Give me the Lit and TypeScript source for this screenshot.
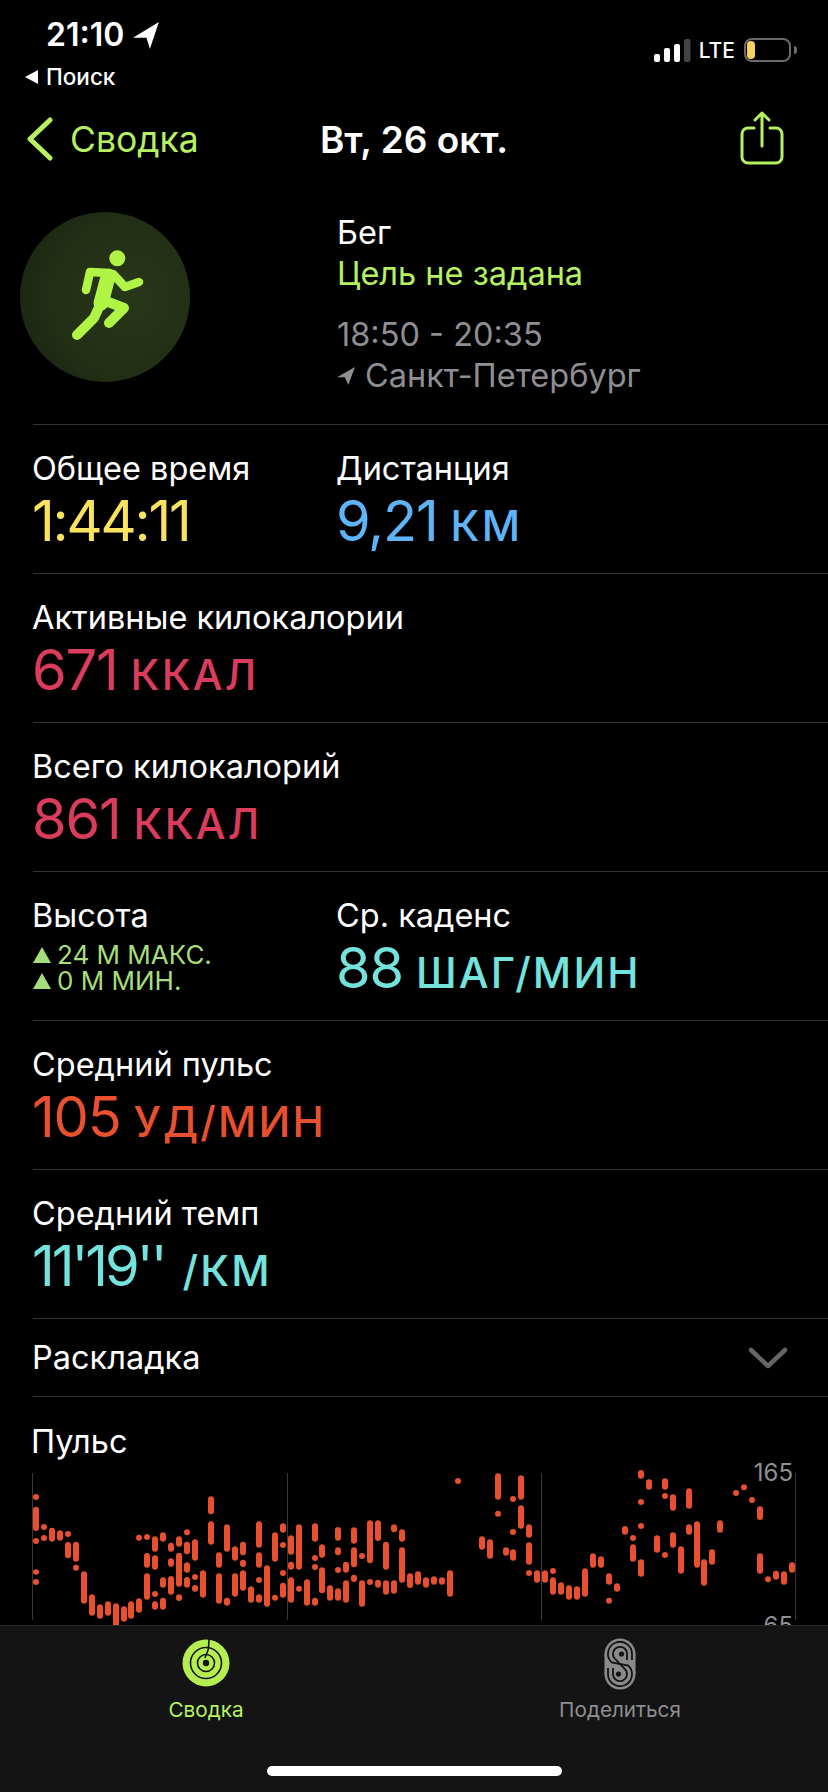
import { LitElement, html, css, svg } from 'lit';
import { customElement } from 'lit/decorators.js';

type Seg = number | [number, number];

// heart rate samples, traced as x, then dots (number) or bars ([top, bottom]), in 3x units
const PULSE_LEFT: [number, ...Seg[]][] = [
  [108, 168, [197, 270], 300, [385, 401], 423],
  [132, 258, 291],
  [156, [260, 302]],
  [180, [268, 299]],
  [204, 279, [303, 352]],
  [228, [302, 362], 380],
  [252, [391, 488]],
  [276, [460, 524]],
  [300, [490, 533]],
  [324, [481, 524]],
  [348, [487, 557]],
  [372, [496, 542]],
  [393, [481, 533]],
  [417, 290, [472, 515]],
  [441, 288, [336, 380], [397, 476]],
  [465, [286, 332], [343, 386], 459, [481, 506]],
  [489, [274, 302], [409, 440], [470, 506]],
  [513, [305, 332], [352, 377], [405, 461]],
  [537, [286, 317], [335, 437], [460, 480]],
  [561, 274, [302, 340], [364, 395], [408, 440]],
  [585, [295, 359], 408, [432, 452]],
  [609, [388, 470]],
  [633, [166, 220], [241, 311]],
  [657, [334, 380], [397, 488]],
  [681, [250, 332], [470, 494]],
  [705, [316, 359], [397, 467]],
  [729, [302, 343], [356, 378], [388, 449]],
  [753, [436, 485]],
  [777, [241, 320], [334, 380], 417, [460, 485]],
  [801, [373, 497]],
  [825, [274, 362], 470],
  [849, [247, 275], 312, 396, [425, 470]],
  [873, [283, 341], [362, 386], [409, 485]],
  [897, [250, 386], 443],
  [921, [415, 494]],
  [945, [247, 302], 351, 378, [470, 494]],
  [966, [310, 350], [379, 457]],
  [990, [433, 479]],
  [1014, [258, 299], [319, 343], 387, [442, 479]],
  [1038, [362, 395], [418, 485]],
  [1062, [259, 308], [319, 379], [401, 423]],
  [1086, 345, [418, 497]],
  [1110, [238, 367], 423],
  [1134, [238, 300], [416, 440]],
  [1158, [302, 386], [418, 461]],
  [1182, [250, 274], [418, 458]],
  [1206, [265, 302], [319, 425]],
  [1230, [397, 441]],
];

const PULSE_RIGHT: [number, ...Seg[]][] = [
  [12, [391, 431]],
  [36, [409, 440]],
  [60, [406, 431]],
  [84, [409, 431]],
  [108, [388, 467]],
  [132, 120],
  [204, [286, 326]],
  [228, [295, 353]],
  [252, [97, 176], 218],
  [276, [319, 344]],
  [297, 174, 273, [325, 359]],
  [321, [103, 176], [193, 263]],
  [345, [250, 290], [304, 371], 396],
  [369, [388, 425]],
  [393, [388, 425]],
  [417, 390, [409, 461]],
  [441, [424, 461]],
  [465, [433, 476]],
  [489, [436, 476]],
  [513, [382, 467]],
  [537, [337, 380]],
  [561, [346, 380]],
  [585, [397, 431], 479],
  [609, [427, 452]],
  [633, [255, 281]],
  [657, 291, [310, 362]],
  [681, [87, 113], 183, 255, [355, 407]],
  [705, [115, 146]],
  [729, [283, 335]],
  [753, [112, 146], 165, 342],
  [777, [160, 209], [274, 320]],
  [801, [316, 398]],
  [825, [142, 203], [250, 281]],
  [849, [241, 380]],
  [870, [355, 434]],
  [894, [325, 371]],
  [918, [238, 275]],
  [966, 156],
  [990, 139],
  [1014, 177],
  [1038, [196, 237], [337, 398]],
  [1062, 415],
  [1086, [389, 416]],
  [1110, [391, 431]],
  [1134, [364, 395]],
];

const GRID_X = [32.5, 287.5, 541.5, 795.5];

const drawColumn = (col: [number, ...Seg[]], offset: number) => {
  const [x, ...segs] = col;
  const px = x / 3 + offset;
  return segs.map((s) => {
    const a = (Array.isArray(s) ? s[0] : s - 9) / 3 - 32;
    const b = (Array.isArray(s) ? s[1] : s + 9) / 3 - 32;
    return svg`<rect class="hr" x=${px - 3} y=${a} width="6" height=${b - a} rx="3"></rect>`;
  });
};

// one dark groove of the sharing icon, an S through both loops
const groove = (r: number) => {
  const k = r * 0.7;
  return `M${r} -4V-10A${r} ${r} 0 1 0 ${-k} ${-10 + k}L${k} ${10 - k}A${r} ${r} 0 1 1 ${-r} 10V4`;
};

@customElement('app-root')
export class AppRoot extends LitElement {
  static override styles = css`
    :host {
      display: flex;
      flex-direction: column;
      width: 828px;
      height: 1792px;
      overflow: hidden;
      background: #000;
      color: #fff;
      font-family: Inter, 'Noto Sans', sans-serif;
    }

    .main {
      flex: 1;
      min-height: 0;
      overflow: hidden;
    }

    svg {
      display: block;
    }

    /* status bar */
    .status {
      display: flex;
      justify-content: space-between;
      height: 96px;
      box-sizing: border-box;
      padding: 14px 31px 0 25px;
    }

    .clock {
      display: flex;
      align-items: center;
      gap: 9px;
      padding-left: 21px;
      font-size: 32px;
      line-height: 42px;
      font-weight: 600;
    }

    .back-app {
      display: flex;
      align-items: center;
      gap: 8px;
      margin-top: 7px;
      font-size: 22.500px;
      line-height: 28px;
      font-weight: 500;
    }

    .signal {
      display: flex;
      align-items: center;
      height: 26px;
      margin-top: 23px;
      font-size: 21px;
      font-weight: 500;
    }

    .lte {
      margin: 0 9px 0 8px;
    }

    .battery {
      box-sizing: border-box;
      width: 47px;
      height: 24px;
      padding: 1px;
      border: 2px solid #6b6b6b;
      border-radius: 8px;
    }

    .battery i {
      display: block;
      width: 8px;
      height: 100%;
      border-radius: 4px;
      background: #f6d45a;
    }

    .nub {
      width: 3px;
      height: 8px;
      margin-left: 3px;
      border-radius: 0 3px 3px 0;
      background: #6b6b6b;
    }

    /* nav */
    .nav {
      position: relative;
      display: flex;
      align-items: center;
      justify-content: space-between;
      height: 86px;
      padding: 0 44px 0 25px;
      color: #b6f161;
      font-size: 35.500px;
    }

    .nav-back {
      display: flex;
      align-items: center;
      gap: 15px;
    }

    .share {
      margin-top: -3px;
    }

    .nav h1 {
      position: absolute;
      left: 0;
      right: 0;
      margin: 0;
      text-align: center;
      color: #fff;
      font-size: 37px;
      font-weight: 600;
      pointer-events: none;
    }

    /* workout summary */
    .hero {
      display: grid;
      grid-template-columns: 304px 1fr;
      box-sizing: border-box;
      height: 243px;
      margin-left: 33px;
      padding-top: 30px;
      border-bottom: 1px solid #333;
      font-size: 32.500px;
      line-height: 41px;
    }

    .badge {
      width: 170px;
      height: 170px;
      margin-left: -13px;
      border-radius: 50%;
      background: radial-gradient(circle at 65% 50%, #283618 0%, #232f15 55%, #182010 100%);
    }

    .goal {
      color: #b6f161;
    }

    .times {
      margin-top: 20px;
      color: #8e8e93;
    }

    .place {
      display: flex;
      align-items: center;
      gap: 10px;
      color: #8e8e93;
    }

    /* metrics */
    .row {
      display: grid;
      grid-template-columns: 304px 1fr;
      box-sizing: border-box;
      height: 149px;
      margin-left: 33px;
      padding-top: 26px;
      border-bottom: 1px solid #333;
    }

    .label {
      margin-left: -1px;
      font-size: 32.500px;
      line-height: 36px;
      white-space: nowrap;
    }

    .value {
      margin: 4px 0 0 -1px;
      font-size: 56px;
      line-height: 60px;
      font-weight: 400;
      letter-spacing: -1.200px;
      white-space: nowrap;
    }

    .tight {
      letter-spacing: -2.200px;
    }

    .tighter {
      letter-spacing: -3px;
    }

    .unit {
      margin-left: 13px;
      font-size: 42px;
      font-weight: 500;
      letter-spacing: 2.200px;
    }

    .tighter + .unit {
      margin-left: 18px;
    }

    .yellow { color: #f8e25e; }
    .blue { color: #5eb4f6; }
    .pink { color: #dc3c5c; }
    .red { color: #e8502f; }
    .cyan { color: #74e2dd; }

    .elev {
      display: flex;
      align-items: center;
      gap: 6px;
      color: #a6de7c;
      font-size: 26px;
      line-height: 26px;
    }

    .label + .elev {
      margin-top: 8px;
    }

    .tri {
      width: 0;
      height: 0;
      border-left: 9px solid transparent;
      border-right: 9px solid transparent;
      border-bottom: 16px solid #a6de7c;
    }

    .splits {
      display: flex;
      align-items: center;
      justify-content: space-between;
      box-sizing: border-box;
      height: 78px;
      margin-left: 33px;
      padding-right: 40px;
      border-bottom: 1px solid #333;
      font-size: 32.500px;
    }

    .splits span {
      margin-left: -1px;
    }

    .chart-title {
      margin: 27px 0 13px 31px;
      font-size: 32.500px;
      line-height: 36px;
    }

    .chart {
      overflow: visible;
    }

    .hr {
      fill: #e8502f;
    }

    .grid-line {
      stroke: #3a3a3a;
      stroke-width: 1;
    }

    .axis {
      fill: #8e8e93;
      font-size: 24px;
      text-anchor: end;
    }

    /* tab bar */
    .tabs {
      flex: none;
      position: relative;
      display: grid;
      grid-template-columns: 412px 416px;
      box-sizing: border-box;
      height: 167px;
      border-top: 1px solid #2b2b2b;
      background: #141414;
    }

    .tab {
      display: flex;
      flex-direction: column;
      align-items: center;
      height: 102px;
      font-size: 20.700px;
      color: #8e8e93;
    }

    .tab.on {
      color: #b6f161;
    }

    .tab svg {
      height: 60px;
      margin: 7px 0 4px;
    }

    .home {
      position: absolute;
      left: 267px;
      top: 140px;
      width: 295px;
      height: 10px;
      border-radius: 5px;
      background: #fff;
    }
  `;

  private runner() {
    return html`<svg class="badge" viewBox="20 212 170 170">
      <g fill="none" stroke="#b0f545" stroke-linecap="round" stroke-linejoin="round">
        <circle cx="117.3" cy="258.3" r="8" fill="#b0f545" stroke="none"></circle>
        <path stroke-width="8.500" d="M110 273 90 272 86 290"></path>
        <path stroke-width="15" d="M108 277 101 303"></path>
        <path stroke-width="10" d="M100 305 94 318 77 335"></path>
        <path stroke-width="10" d="M103 300 124 308 109 323"></path>
        <path stroke-width="8.500" d="M113 274 125 287 139 282"></path>
      </g>
    </svg>`;
  }

  private chart() {
    return html`<svg class="chart" width="828" height="154" viewBox="0 0 828 154">
      ${GRID_X.map((x) => svg`<line class="grid-line" x1=${x} x2=${x} y1="0" y2="147"></line>`)}
      ${PULSE_LEFT.map((c) => drawColumn(c, 0))}
      ${PULSE_RIGHT.map((c) => drawColumn(c, 414))}
      <text class="axis" x="793" y="8">165</text>
      <text class="axis" x="793" y="161">65</text>
    </svg>`;
  }

  override render() {
    return html`
      <div class="main">
        <div class="status">
          <div>
            <div class="clock">
              21:10
              <svg width="27" height="27" viewBox="0 0 24 24"><path fill="#fff" d="M23 0 0 14h12l3 10z"></path></svg>
            </div>
            <div class="back-app">
              <svg width="13" height="14" viewBox="0 0 13 14"><path fill="#fff" d="M13 0v14L0 7z"></path></svg>
              Поиск
            </div>
          </div>
          <div class="signal">
            <svg width="37" height="23" viewBox="0 0 37 23">
              <rect y="15" width="6" height="8" rx="2" fill="#fff"></rect>
              <rect x="10" y="9" width="6" height="14" rx="2" fill="#fff"></rect>
              <rect x="20" y="5" width="6" height="18" rx="2" fill="#fff"></rect>
              <rect x="30" width="6.500" height="23" rx="2" fill="#444"></rect>
            </svg>
            <span class="lte">LTE</span>
            <div class="battery"><i></i></div>
            <div class="nub"></div>
          </div>
        </div>

        <div class="nav">
          <div class="nav-back">
            <svg width="30" height="44" viewBox="0 0 30 44" fill="none" stroke="#b6f161" stroke-width="5" stroke-linecap="round" stroke-linejoin="round">
              <path d="M25 3 5 22l20 19"></path>
            </svg>
            Сводка
          </div>
          <h1>Вт, 26 окт.</h1>
          <svg class="share" width="44" height="54" viewBox="0 0 44 54" fill="none" stroke="#b6f161" stroke-width="3" stroke-linecap="round" stroke-linejoin="round">
            <path d="M22 35V3M15 9l7-7 7 7"></path>
            <path d="M14 17H8a6 6 0 0 0-6 6v23a6 6 0 0 0 6 6h28a6 6 0 0 0 6-6V23a6 6 0 0 0-6-6h-6"></path>
          </svg>
        </div>

        <div class="hero">
          ${this.runner()}
          <div>
            <div>Бег</div>
            <div class="goal">Цель не задана</div>
            <div class="times">18:50 - 20:35</div>
            <div class="place">
              <svg width="18" height="18" viewBox="0 0 16 16"><path fill="#8e8e93" d="M16 0 0 9h7l3 7z"></path></svg>
              Санкт-Петербург
            </div>
          </div>
        </div>

        <div class="row">
          <div>
            <div class="label">Общее время</div>
            <div class="value yellow tight">1:44:11</div>
          </div>
          <div>
            <div class="label">Дистанция</div>
            <div class="value blue">9,21<span class="unit">КМ</span></div>
          </div>
        </div>
        <div class="row">
          <div>
            <div class="label">Активные килокалории</div>
            <div class="value pink">671<span class="unit">ККАЛ</span></div>
          </div>
        </div>
        <div class="row">
          <div>
            <div class="label">Всего килокалорий</div>
            <div class="value pink">861<span class="unit">ККАЛ</span></div>
          </div>
        </div>
        <div class="row">
          <div>
            <div class="label">Высота</div>
            <div class="elev"><span class="tri"></span>24 М МАКС.</div>
            <div class="elev"><span class="tri"></span>0 М МИН.</div>
          </div>
          <div>
            <div class="label">Ср. каденс</div>
            <div class="value cyan">88<span class="unit">ШАГ/МИН</span></div>
          </div>
        </div>
        <div class="row">
          <div>
            <div class="label">Средний пульс</div>
            <div class="value red">105<span class="unit">УД/МИН</span></div>
          </div>
        </div>
        <div class="row">
          <div>
            <div class="label">Средний темп</div>
            <div class="value cyan"><span class="tighter">11'19''</span><span class="unit">/КМ</span></div>
          </div>
        </div>
        <div class="splits">
          <span>Раскладка</span>
          <svg width="40" height="22" viewBox="0 0 40 22" fill="none" stroke="#666" stroke-width="4.500" stroke-linecap="round" stroke-linejoin="round">
            <path d="M3 3l17 16L37 3"></path>
          </svg>
        </div>
        <div class="chart-title">Пульс</div>
        ${this.chart()}
      </div>

      <div class="tabs">
        <div class="tab on">
          <svg width="60" height="60" viewBox="-30 -30 60 60" fill="none">
            <circle r="23.5" fill="#b6ee52"></circle>
            <circle r="15.5" stroke="#141414" stroke-width="1.600"></circle>
            <circle r="8.500" stroke="#141414" stroke-width="1.600"></circle>
            <circle r="3.200" fill="#141414"></circle>
            <path stroke="#141414" stroke-width="1.600" d="M3-24 2.500-15C2-11 0-9-1-5"></path>
          </svg>
          Сводка
        </div>
        <div class="tab">
          <svg width="60" height="60" viewBox="-30 -31 60 60" fill="none">
            <circle cy="-10" r="15.500" fill="#8a8a8a"></circle>
            <circle cy="10" r="15.500" fill="#8a8a8a"></circle>
            <rect x="-15.500" y="-10" width="31" height="20" fill="#8a8a8a"></rect>
            <path d=${groove(12)} stroke="#141414" stroke-width="1.800"></path>
            <path d=${groove(7)} stroke="#141414" stroke-width="1.800"></path>
            <circle cx="1.500" cy="-10" r="2.600" fill="#141414"></circle>
            <circle cx="-1.500" cy="10" r="2.600" fill="#141414"></circle>
          </svg>
          Поделиться
        </div>
        <div class="home"></div>
      </div>
    `;
  }
}
